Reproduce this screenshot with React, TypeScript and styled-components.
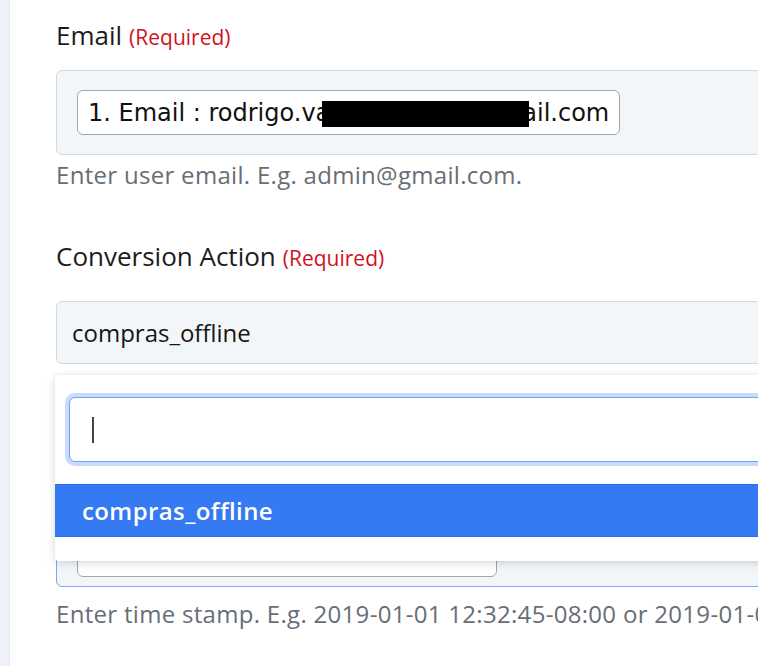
import React from "react";
import styled, { createGlobalStyle } from "styled-components";

const Global = createGlobalStyle`
  html, body { margin: 0; padding: 0; background: #ffffff; overflow: hidden; }
  body { font-family: "Open Sans", Lato, sans-serif; }
`;

const Page = styled.div`
  display: flex;
  width: 758px;
  height: 666px;
  overflow: hidden;
`;

const Sidebar = styled.div`
  flex: 0 0 9px;
  background: #eef2f8;
  border-right: 1px solid #e2e9f6;
`;

const Main = styled.div`
  flex: 1;
  padding: 18px 0 0 46px;
  background: #ffffff;
`;

const Field = styled.div<{ $gap?: number }>`
  position: relative;
  width: 760px;
  margin-top: ${(p) => p.$gap ?? 0}px;
`;

const Label = styled.div<{ $mb: number; $covered?: boolean }>`
  font-size: 26px;
  line-height: 34px;
  color: #1c1c1c;
  margin-bottom: ${(p) => p.$mb}px;
  white-space: nowrap;
  visibility: ${(p) => (p.$covered ? "hidden" : "visible")};
`;

const Required = styled.span`
  font-size: 21px;
  color: #cf1322;
  margin-left: 7px;
`;

const TagBox = styled.div<{ $focused?: boolean; $pb?: number }>`
  box-sizing: border-box;
  height: 85px;
  display: flex;
  align-items: ${(p) => (p.$focused ? "flex-end" : "center")};
  padding: 0 20px ${(p) => p.$pb ?? 0}px;
  background: #f3f6f9;
  border: 1px solid ${(p) => (p.$focused ? "#7aa8f2" : "#d3d8de")};
  border-radius: 6px;
`;

const Tag = styled.div<{ $w?: number }>`
  box-sizing: border-box;
  height: 45px;
  ${(p) => (p.$w ? `width: ${p.$w}px;` : "")}
  display: inline-flex;
  align-items: center;
  padding: 0 10px;
  background: #ffffff;
  border: 1px solid #a6a6a6;
  border-radius: 6px;
  font-family: "DejaVu Sans", Verdana, sans-serif;
  font-size: 24px;
  color: #111;
  white-space: nowrap;
`;

const Redact = styled.span`
  display: inline-block;
  width: 207px;
  height: 26px;
  background: #000;
  margin: 0 -7px 0 -8px;
  position: relative;
  top: 1px;
`;

const Help = styled.div<{ $mt: number }>`
  margin-top: ${(p) => p.$mt}px;
  font-size: 24px;
  line-height: 32px;
  letter-spacing: 0.3px;
  color: #676e76;
  white-space: nowrap;
`;

const SelectBox = styled.div`
  box-sizing: border-box;
  height: 63px;
  display: flex;
  align-items: center;
  padding-left: 15px;
  background: #f3f6f9;
  border: 1px solid #d3d8de;
  border-radius: 6px;
  font-size: 24px;
  color: #151515;
`;

const Dropdown = styled.div`
  position: absolute;
  top: calc(100% + 11px);
  left: -1px;
  right: -20px;
  z-index: 10;
  box-sizing: border-box;
  height: 186px;
  padding: 22px 0 0 14px;
  background: #ffffff;
  border-radius: 4px;
  box-shadow: 0 2px 8px rgba(0, 0, 0, 0.16), 0 0 1px rgba(0, 0, 0, 0.08);
`;

const Search = styled.div`
  box-sizing: border-box;
  height: 65px;
  display: flex;
  align-items: center;
  padding-left: 22px;
  background: #fff;
  border: 1px solid #6fa1f2;
  border-radius: 6px;
  box-shadow: 0 0 0 4px #c9dbfb;
`;

const Caret = styled.span`
  display: block;
  width: 2px;
  height: 26px;
  background: #444;
`;

const Option = styled.div`
  box-sizing: border-box;
  height: 53px;
  margin: 22px 0 0 -14px;
  padding-left: 27px;
  display: flex;
  align-items: center;
  background: #3579f3;
  border-top: 1px solid #2a6ef0;
  border-bottom: 1px solid #2a6ef0;
  color: #ffffff;
  font-size: 24px;
  font-weight: 600;
  letter-spacing: 0.4px;
`;

export default function App() {
  return (
    <>
      <Global />
      <Page>
        <Sidebar />
        <Main>
          <Field>
            <Label $mb={16}>
              Email<Required>(Required)</Required>
            </Label>
            <TagBox>
              <Tag>
                1. Email : rodrigo.va<Redact />ail.com
              </Tag>
            </TagBox>
            <Help $mt={4}>Enter user email. E.g. admin@gmail.com.</Help>
          </Field>

          <Field $gap={48}>
            <Label $mb={26}>
              Conversion Action<Required>(Required)</Required>
            </Label>
            <SelectBox>compras_offline</SelectBox>
            <Dropdown>
              <Search>
                <Caret />
              </Search>
              <Option>compras_offline</Option>
            </Dropdown>
          </Field>

          <Field $gap={84}>
            <Label $mb={18} $covered aria-hidden="true">
              Conversion Time<Required>(Required)</Required>
            </Label>
            <TagBox $focused $pb={9}>
              <Tag $w={420} />
            </TagBox>
            <Help $mt={11}>
              Enter time stamp. E.g. 2019-01-01 12:32:45-08:00 or 2019-01-01 12:32:45
            </Help>
          </Field>
        </Main>
      </Page>
    </>
  );
}
